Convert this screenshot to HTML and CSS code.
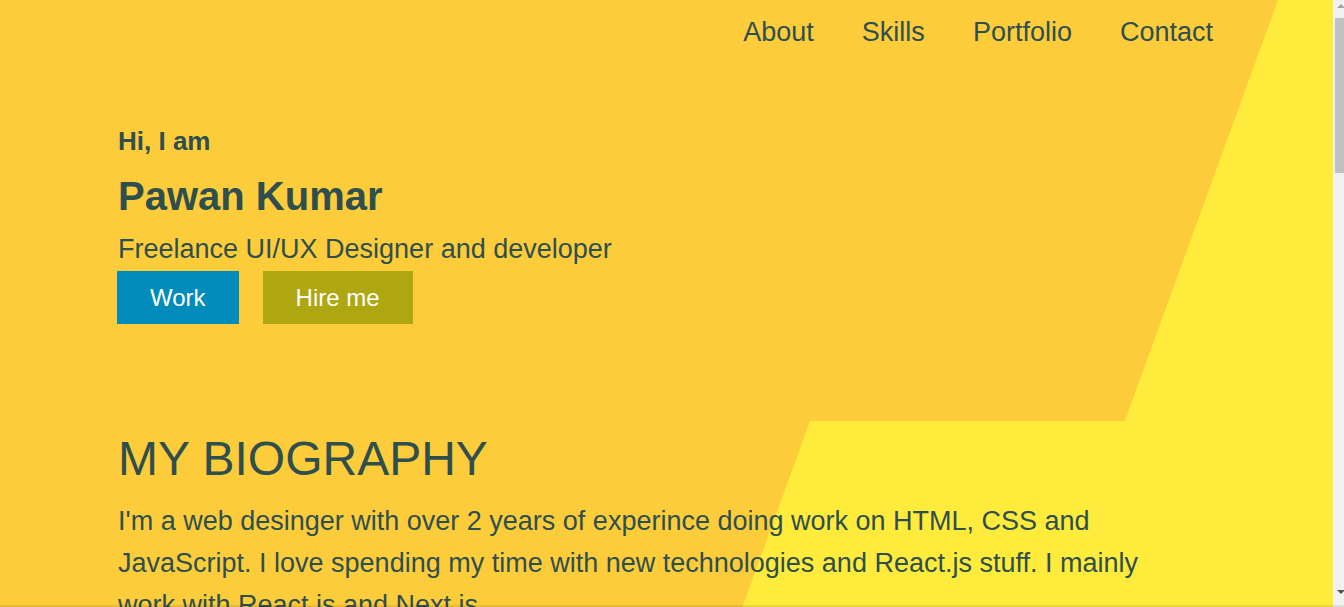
FILE: index.html
```html
<!DOCTYPE html>
<html lang="en">
<head>
<meta charset="utf-8">
<title>Pawan Kumar</title>
<link rel="stylesheet" href="styles.css">
</head>
<body>
  <header class="hero">
    <nav class="nav">
      <a class="nav-link" href="#about">About</a>
      <a class="nav-link" href="#skills">Skills</a>
      <a class="nav-link" href="#portfolio">Portfolio</a>
      <a class="nav-link" href="#contact">Contact</a>
    </nav>
    <div class="intro">
      <h3 class="greet">Hi, I am</h3>
      <h1 class="name">Pawan Kumar</h1>
      <p class="role">Freelance UI/UX Designer and developer</p>
      <div class="actions">
        <a class="btn btn-work" href="#portfolio">Work</a>
        <a class="btn btn-hire" href="#contact">Hire me</a>
      </div>
    </div>
  </header>
  <section class="bio" id="about">
    <h2 class="bio-title">MY BIOGRAPHY</h2>
    <p class="bio-text">I'm a web desinger with over 2 years of experince doing work on HTML, CSS and JavaScript. I love spending my time with new technologies and React.js stuff. I mainly work with React.js and Next.js.</p>
  </section>
  <div class="scrollbar" aria-hidden="true">
    <span class="scroll-arrow scroll-up"></span>
    <span class="scroll-thumb"></span>
    <span class="scroll-arrow scroll-down"></span>
  </div>
  <div class="bottom-edge" aria-hidden="true"></div>
</body>
</html>
```
FILE: styles.css
```css
html, body {
  margin: 0;
  padding: 0;
}

body {
  background: #ffeb3b;
  color: #2f4f4f;
  font-family: "Liberation Sans", Arial, sans-serif;
}

.hero {
  position: relative;
  isolation: isolate;
  overflow: hidden;
  height: 421px;
  box-sizing: border-box;
  display: flex;
  flex-direction: column;
}

.hero::before {
  content: "";
  position: absolute;
  top: 0;
  left: 0;
  width: 1278px;
  height: 100%;
  background: #fdcc3a;
  transform-origin: top left;
  transform: skewX(-20deg);
  z-index: -1;
}

.nav {
  display: flex;
  justify-content: flex-end;
  gap: 48px;
  padding: 17px 131px 0 0;
}

.nav-link {
  font-size: 27px;
  line-height: 31px;
  color: #2f4f4f;
  text-decoration: none;
}

.intro {
  padding-left: 118px;
  margin-top: 78px;
}

.greet {
  margin: 0;
  font-size: 26px;
  line-height: 30px;
  font-weight: bold;
}

.name {
  margin: 17px 0 0;
  font-size: 40px;
  line-height: 46px;
  font-weight: bold;
}

.role {
  margin: 15px 0 0;
  font-size: 27px;
  line-height: 31px;
}

.actions {
  display: flex;
  gap: 24px;
  margin-top: 6px;
  margin-left: -1px;
}

.btn {
  display: block;
  padding: 13px 33px;
  font-size: 24px;
  line-height: 27px;
  color: #ffffff;
  text-decoration: none;
}

.btn-work {
  background: #008cba;
}

.btn-hire {
  background: #aea712;
}

.bio {
  position: relative;
  isolation: isolate;
  overflow: hidden;
  min-height: 1820px;
  box-sizing: border-box;
  padding: 10px 0 0 118px;
}

.bio::before {
  content: "";
  position: absolute;
  top: 0;
  left: 0;
  width: 810px;
  height: 100%;
  background: #fdcc3a;
  transform-origin: top left;
  transform: skewX(-20deg);
  z-index: -1;
}

.bio-title {
  margin: 0;
  font-size: 48px;
  line-height: 55px;
  font-weight: normal;
}

.bio-text {
  margin: 14px 0 0;
  width: 1052px;
  font-size: 27px;
  line-height: 42px;
}

/* browser scrollbar, as seen at the right edge of the window */
.scrollbar {
  position: fixed;
  top: 0;
  right: 0;
  width: 11px;
  height: 100vh;
  background: #f1f1f1;
  display: flex;
  flex-direction: column;
  align-items: flex-end;
}

.scroll-arrow {
  width: 0;
  height: 0;
  border-left: 4px solid transparent;
  border-right: 4px solid transparent;
  margin-right: -1px;
}

.scroll-up {
  margin-top: 4px;
  border-bottom: 4px solid #a3a3a3;
}

.scroll-thumb {
  width: 9px;
  height: 155px;
  margin-top: 10px;
  background: #c1c1c1;
}

.scroll-down {
  margin-top: auto;
  margin-bottom: 13px;
  border-top: 4px solid #505050;
}

.bottom-edge {
  position: fixed;
  left: 0;
  right: 0;
  bottom: 0;
  height: 3px;
  background: linear-gradient(rgba(0, 0, 0, 0), rgba(0, 0, 0, 0.12));
}
```
